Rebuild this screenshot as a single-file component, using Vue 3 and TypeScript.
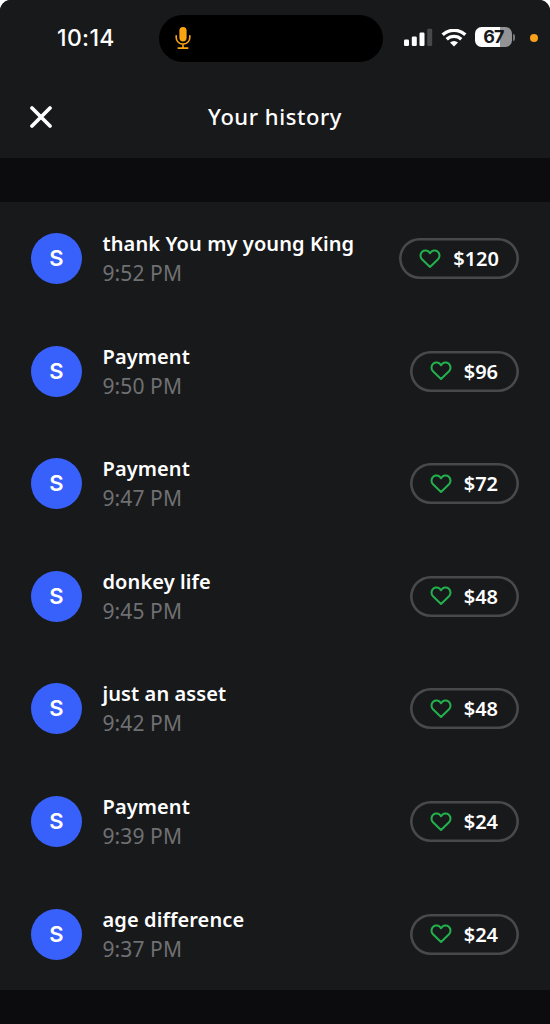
<script setup lang="ts">
interface Payment {
  title: string
  time: string
  amount: string
}

const payments: Payment[] = [
  { title: 'thank You my young King', time: '9:52 PM', amount: '$120' },
  { title: 'Payment', time: '9:50 PM', amount: '$96' },
  { title: 'Payment', time: '9:47 PM', amount: '$72' },
  { title: 'donkey life', time: '9:45 PM', amount: '$48' },
  { title: 'just an asset', time: '9:42 PM', amount: '$48' },
  { title: 'Payment', time: '9:39 PM', amount: '$24' },
  { title: 'age difference', time: '9:37 PM', amount: '$24' },
]
</script>

<template>
  <main class="screen">
    <div class="status">
      <span class="clock">10:14</span>
      <div class="island">
        <svg class="mic" width="16" height="24" viewBox="0 0 16 24">
          <rect x="4.4" y="1" width="7.2" height="14.4" rx="3.6" fill="#fda50f" />
          <path d="M1.2 9.8v2a6.8 6.3 0 0 0 13.6 0v-2M8 18.3v3.8M3.2 22.1h9.6" fill="none" stroke="#fda50f" stroke-width="1.6" stroke-linecap="round" />
        </svg>
      </div>
      <svg class="signal" width="28" height="18" viewBox="0 0 28 18">
        <rect x="0" y="10.5" width="5" height="6.5" rx="1.2" fill="#fff" />
        <rect x="7.8" y="7.5" width="5" height="9.5" rx="1.2" fill="#fff" />
        <rect x="15.5" y="3.5" width="5" height="13.5" rx="1.2" fill="#fff" />
        <rect x="23.2" y="-0.2" width="5" height="17.2" rx="1.2" fill="#47484a" />
      </svg>
      <svg class="wifi" width="26" height="18" viewBox="0 0 26 18">
        <path d="M1.7 5.8a16.4 16.4 0 0 1 22.6 0" fill="none" stroke="#fff" stroke-width="3.4" />
        <path d="M5.7 10.2a10.6 10.6 0 0 1 14.6 0" fill="none" stroke="#fff" stroke-width="3.3" />
        <path d="M13 17.4l-4-3.9a5.8 5.8 0 0 1 8 0z" fill="#fff" />
      </svg>
      <div class="battery"><span>67</span></div>
      <i class="nub"></i>
      <i class="recording"></i>
    </div>

    <header class="header">
      <svg class="close" width="22" height="22" viewBox="0 0 22 22">
        <path d="M2 2l18 18M20 2L2 20" stroke="#fff" stroke-width="3.7" stroke-linecap="round" />
      </svg>
      <h1>Your history</h1>
    </header>

    <ul class="list">
      <li v-for="p in payments" :key="p.time" class="row">
        <span class="avatar">S</span>
        <div class="info">
          <span class="title">{{ p.title }}</span>
          <span class="time">{{ p.time }}</span>
        </div>
        <div class="pill">
          <svg width="22" height="20" viewBox="0 0 22 20">
            <path d="M11 4.3C9.1 1.1 5.6.6 3.4 2.6 1 4.8.9 8 3 10.2L11 18l8-7.8c2.1-2.2 2-5.4-.4-7.6C16.4.6 12.9 1.1 11 4.3z" fill="none" stroke="#23b14d" stroke-width="2" stroke-linejoin="round" />
          </svg>
          <span class="amount">{{ p.amount }}</span>
        </div>
      </li>
    </ul>
  </main>
</template>

<style>
body {
  background: #fff;
}
</style>

<style scoped>
.screen {
  width: 550px;
  height: 1024px;
  overflow: hidden;
  background: #0c0c0e;
  color: #fff;
  border-radius: 11px 11px 0 0;
  font-family: "Noto Sans", "Open Sans", sans-serif;
}

.status {
  height: 76px;
  display: flex;
  align-items: center;
  box-sizing: border-box;
  padding-left: 57px;
  background: #18191b;
}

.clock {
  width: 102px;
  font: 500 23px/28px Inter, sans-serif;
  letter-spacing: 0.35px;
}

.island {
  width: 224px;
  height: 47px;
  display: flex;
  align-items: center;
  box-sizing: border-box;
  padding-left: 15.5px;
  border-radius: 24px;
  background: #000;
}

.signal {
  margin-left: 21px;
  overflow: visible;
}

.wifi {
  margin-left: 9px;
}

.battery {
  width: 37px;
  height: 20px;
  margin: -2px 0 0 8px;
  border-radius: 6.5px;
  background: linear-gradient(90deg, #fff 67%, #939395 67%);
  color: #18191b;
  text-align: center;
  font: 700 18px/20px Inter, sans-serif;
  letter-spacing: -0.8px;
}

.nub {
  width: 2px;
  height: 7px;
  margin: -2px 0 0 1px;
  border-radius: 0 3px 3px 0;
  background: #77787a;
}

.recording {
  width: 8px;
  height: 8px;
  margin: -1px 0 0 15px;
  border-radius: 50%;
  background: #f9a11b;
}

.header {
  height: 81.5px;
  display: grid;
  grid-template-columns: 82px 1fr 82px;
  align-items: center;
  background: #18191b;
}

.close {
  margin-left: 30px;
}

h1 {
  margin: 0 0 1px;
  text-align: center;
  font-size: 22px;
  line-height: 30px;
  font-weight: 550;
  letter-spacing: 0.55px;
}

.list {
  height: 788px;
  margin: 44.9px 0 0;
  padding: 0;
  display: grid;
  grid-template-rows: repeat(7, 1fr);
  list-style: none;
  background: #18191b;
}

.row {
  display: flex;
  align-items: center;
  padding: 0 31px;
}

.avatar {
  width: 51px;
  height: 51px;
  border-radius: 50%;
  background: #3861fb;
  text-align: center;
  font: 600 22px/51px Inter, sans-serif;
}

.info {
  flex: 1;
  display: flex;
  flex-direction: column;
  margin-left: 20.5px;
  white-space: nowrap;
}

.title {
  font-size: 20px;
  line-height: 29px;
  font-weight: 600;
  letter-spacing: 0.1px;
}

.time {
  font-size: 21px;
  line-height: 30px;
  letter-spacing: 0.1px;
  color: #6f7072;
}

.pill {
  height: 41px;
  display: flex;
  align-items: center;
  box-sizing: border-box;
  gap: 12px;
  padding: 0 20px 0 19.8px;
  border-radius: 21px;
  box-shadow: inset 0 0 0 2.6px #48494b;
}

.amount {
  min-width: 35.3px;
  padding-top: 1px;
  font-size: 20px;
  line-height: 30px;
  font-weight: 600;
}
</style>
